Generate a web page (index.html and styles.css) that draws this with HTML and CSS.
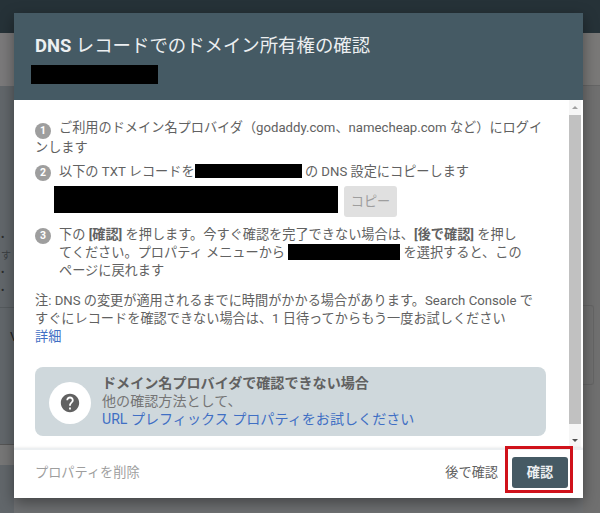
FILE: index.html
```html
<!DOCTYPE html>
<html lang="ja">
<head>
<meta charset="utf-8">
<title>DNS レコードでのドメイン所有権の確認</title>
<link rel="stylesheet" href="styles.css">
</head>
<body>
<div class="backdrop">
  <div class="appbar"></div>
  <div class="bg-main">
    <div class="bg-left">
      <div class="bg-l-band"></div>
      <div class="bullets"><span>•</span><span class="bg-char">す</span><span>•</span><span>•</span></div>
      <div class="bg-rule"></div>
      <div class="bg-v">V</div>
      <div class="bg-l-foot"></div>
    </div>
    <div class="bg-right">
      <div class="bg-r-band"></div>
      <div class="bg-r-card"></div>
    </div>
  </div>
</div>
<div class="dialog">
  <header class="head">
    <h1><b>DNS</b> レコードでのドメイン所有権の確認</h1>
    <div class="redact title-redact"></div>
  </header>
  <div class="middle">
    <div class="content">
      <ol class="steps">
        <li class="step">
          <p><span class="num num-inline">1</span>ご利用のドメイン名プロバイダ（godaddy.com、namecheap.com など）にログインします</p>
        </li>
        <li class="step step-2">
          <span class="num">2</span>
          <div>
            <p>以下の TXT レコードを<span class="redact inline r1"></span> の DNS 設定にコピーします</p>
            <div class="copyrow">
              <div class="redact record"></div>
              <button class="copy">コピー</button>
            </div>
          </div>
        </li>
        <li class="step step-3">
          <span class="num">3</span>
          <p class="narrow">下の <b>[確認]</b> を押します。今すぐ確認を完了できない場合は、<b>[後で確認]</b> を押してください。プロパティ メニューから <span class="redact inline r2"></span> を選択すると、このページに戻れます</p>
        </li>
      </ol>
      <p class="note">注: DNS の変更が適用されるまでに時間がかかる場合があります。Search Console ですぐにレコードを確認できない場合は、1 日待ってからもう一度お試しください<br><a href="#">詳細</a></p>
      <div class="hint">
        <div class="hint-icon">
          <svg width="22" height="22" viewBox="0 0 24 24"><path fill="#616161" d="M12 2C6.48 2 2 6.48 2 12s4.48 10 10 10 10-4.48 10-10S17.52 2 12 2zm1 17h-2v-2h2v2zm2.07-7.75-.9.92C13.45 12.9 13 13.5 13 15h-2v-.5c0-1.1.45-2.1 1.17-2.83l1.24-1.26c.37-.36.59-.86.59-1.41 0-1.1-.9-2-2-2s-2 .9-2 2H8c0-2.21 1.79-4 4-4s4 1.79 4 4c0 .88-.36 1.68-.93 2.25z"/></svg>
        </div>
        <div class="hint-text">
          <strong>ドメイン名プロバイダで確認できない場合</strong>
          <span>他の確認方法として、</span>
          <a href="#">URL プレフィックス プロパティをお試しください</a>
        </div>
      </div>
    </div>
    <div class="scrollbar">
      <div class="arrow up"></div>
      <div class="thumb"></div>
      <div class="arrow down"></div>
    </div>
  </div>
  <footer class="foot">
    <span class="delete">プロパティを削除</span>
    <span class="later">後で確認</span>
    <button class="confirm">確認</button>
  </footer>
</div>
<div class="annotation"></div>
</body>
</html>
```
FILE: styles.css
```css
* { box-sizing: border-box; }
html, body { margin: 0; height: 100%; }
body {
  width: 600px; height: 513px; overflow: hidden; position: relative;
  background: #6f7173;
  font-family: Roboto, "Noto Sans CJK JP", sans-serif;
  font-size: 13.18px; line-height: 18px; color: #616161;
}
.backdrop { position: absolute; inset: 0; display: flex; flex-direction: column; }
.appbar { height: 33px; flex: none; background: #263238; }
.bg-main { flex: 1; display: flex; justify-content: space-between; }
.bg-left { width: 14px; background: #62676b; color: #2b2b2b; font-size: 10px; display: flex; flex-direction: column; }
.bg-l-band { height: 53px; flex: none; background: #7b7a7b; }
.bullets { display: flex; flex-direction: column; padding: 143px 0 0 1px; line-height: 17.5px; }
.bg-char { color: #3c4043; }
.bg-rule { height: 1px; flex: none; background: #565b5e; margin-top: 8px; }
.bg-v { font-size: 13px; margin: 20px 0 0 10px; color: #222; line-height: 18px; }
.bg-l-foot { height: 21px; flex: none; background: #777; margin-top: 98px; border-top: 1px solid #555; }
.bg-right { width: 17px; background: #707070; display: flex; flex-direction: column; }
.bg-r-band { height: 53px; flex: none; background: #7a7978; border-bottom: 1px solid #666; }
.bg-r-card { height: 80px; flex: none; margin: 219px 6px 0 -6px; border: 1px solid #656565; border-left: 0; border-radius: 0 3px 3px 0; }
.dialog {
  position: absolute; left: 14px; top: 13px; width: 569px; height: 485px;
  background: #fff; display: flex; flex-direction: column;
  box-shadow: 0 5px 14px rgba(0,0,0,.4);
}
.head { height: 87px; background: #455a64; padding: 23px 21px 0; }
.head h1 { margin: 0; font-size: 18.4px; line-height: 20px; font-weight: 400; color: #eceff1; }
.head b { font-weight: 700; }
.redact { background: #000; }
.title-redact { width: 127px; height: 19px; margin: 9px 0 0 -4px; }
.middle { flex: 1; display: flex; min-height: 0; }
.content { flex: 1; padding: 19px 19px 0 21px; min-width: 0; }
.steps { list-style: none; margin: 0; padding: 0; }
.step { display: flex; align-items: flex-start; gap: 8px; }
.step p { margin: 0; }
.step-2 { margin-top: 6px; }
.step-3 { margin-top: 9px; }
.num {
  flex: none; width: 16px; height: 16px; margin-top: 2px; border-radius: 50%;
  background: #9e9e9e; color: #fff; font-size: 10.5px; font-weight: 700; line-height: 16px; text-align: center;
}
.num-inline { display: inline-block; margin: 0 8px 0 0; vertical-align: -2px; }
.narrow { width: 466px; }
.inline { display: inline-block; height: 14px; vertical-align: -2px; }
.r1 { width: 107px; }
.r2 { width: 112px; height: 16px; vertical-align: -3px; }
.copyrow { display: flex; align-items: flex-start; gap: 6px; margin: 5px 0 0 -5px; }
.record { width: 284px; height: 27px; }
.copy {
  width: 53px; height: 31px; border: 0; border-radius: 3px; background: #e0e0e0; color: #9e9e9e;
  font: inherit; padding: 0;
}
.note { margin: 12px 0 0; width: 508px; }
.note a, .hint-text a { color: #3f6fc4; text-decoration: none; }
.hint {
  margin-top: 21px; height: 69px; width: 511px; border-radius: 8px; background: #cfd8dc;
  display: flex; align-items: center; padding-left: 14px; gap: 11px;
}
.hint-icon { width: 42px; height: 42px; margin-top: 2px; border-radius: 50%; background: #fff; display: flex; align-items: center; justify-content: center; }
.hint-text { display: flex; flex-direction: column; font-size: 14.08px; margin-bottom: 2px; }
.hint-text strong { font-weight: 700; color: #616161; }
.hint-text span { color: #757575; }
.scrollbar { width: 12px; flex: none; margin-right: 2px; background: #f6f6f6; display: flex; flex-direction: column; }
.arrow { height: 15px; flex: none; position: relative; }
.arrow::after { content: ""; position: absolute; left: 3px; border-left: 3px solid transparent; border-right: 3px solid transparent; }
.arrow.up::after { top: 6px; border-bottom: 3px solid #a0a0a0; }
.arrow.down::after { top: 6px; border-top: 3px solid #505050; }
.thumb { flex: 1; background: #c1c1c1; margin-bottom: 9px; }
.foot {
  height: 50px; flex: none; display: flex; align-items: center; padding: 0 15px 3px 21px;
  border-top: 2px solid #eceff1; box-shadow: 0 -1px 2px rgba(0,0,0,.06);
}
.delete { color: #9e9e9e; }
.later { margin-left: auto; color: #616161; }
.confirm {
  margin-left: 14px; width: 56px; height: 31px; border: 0; border-radius: 3px; background: #455a64;
  color: #eceff1; font: inherit; font-weight: 700; padding: 0;
}
.annotation {
  position: absolute; left: 505px; top: 446px; width: 68px; height: 47px; border: 3px solid #d0121b;
}
```
